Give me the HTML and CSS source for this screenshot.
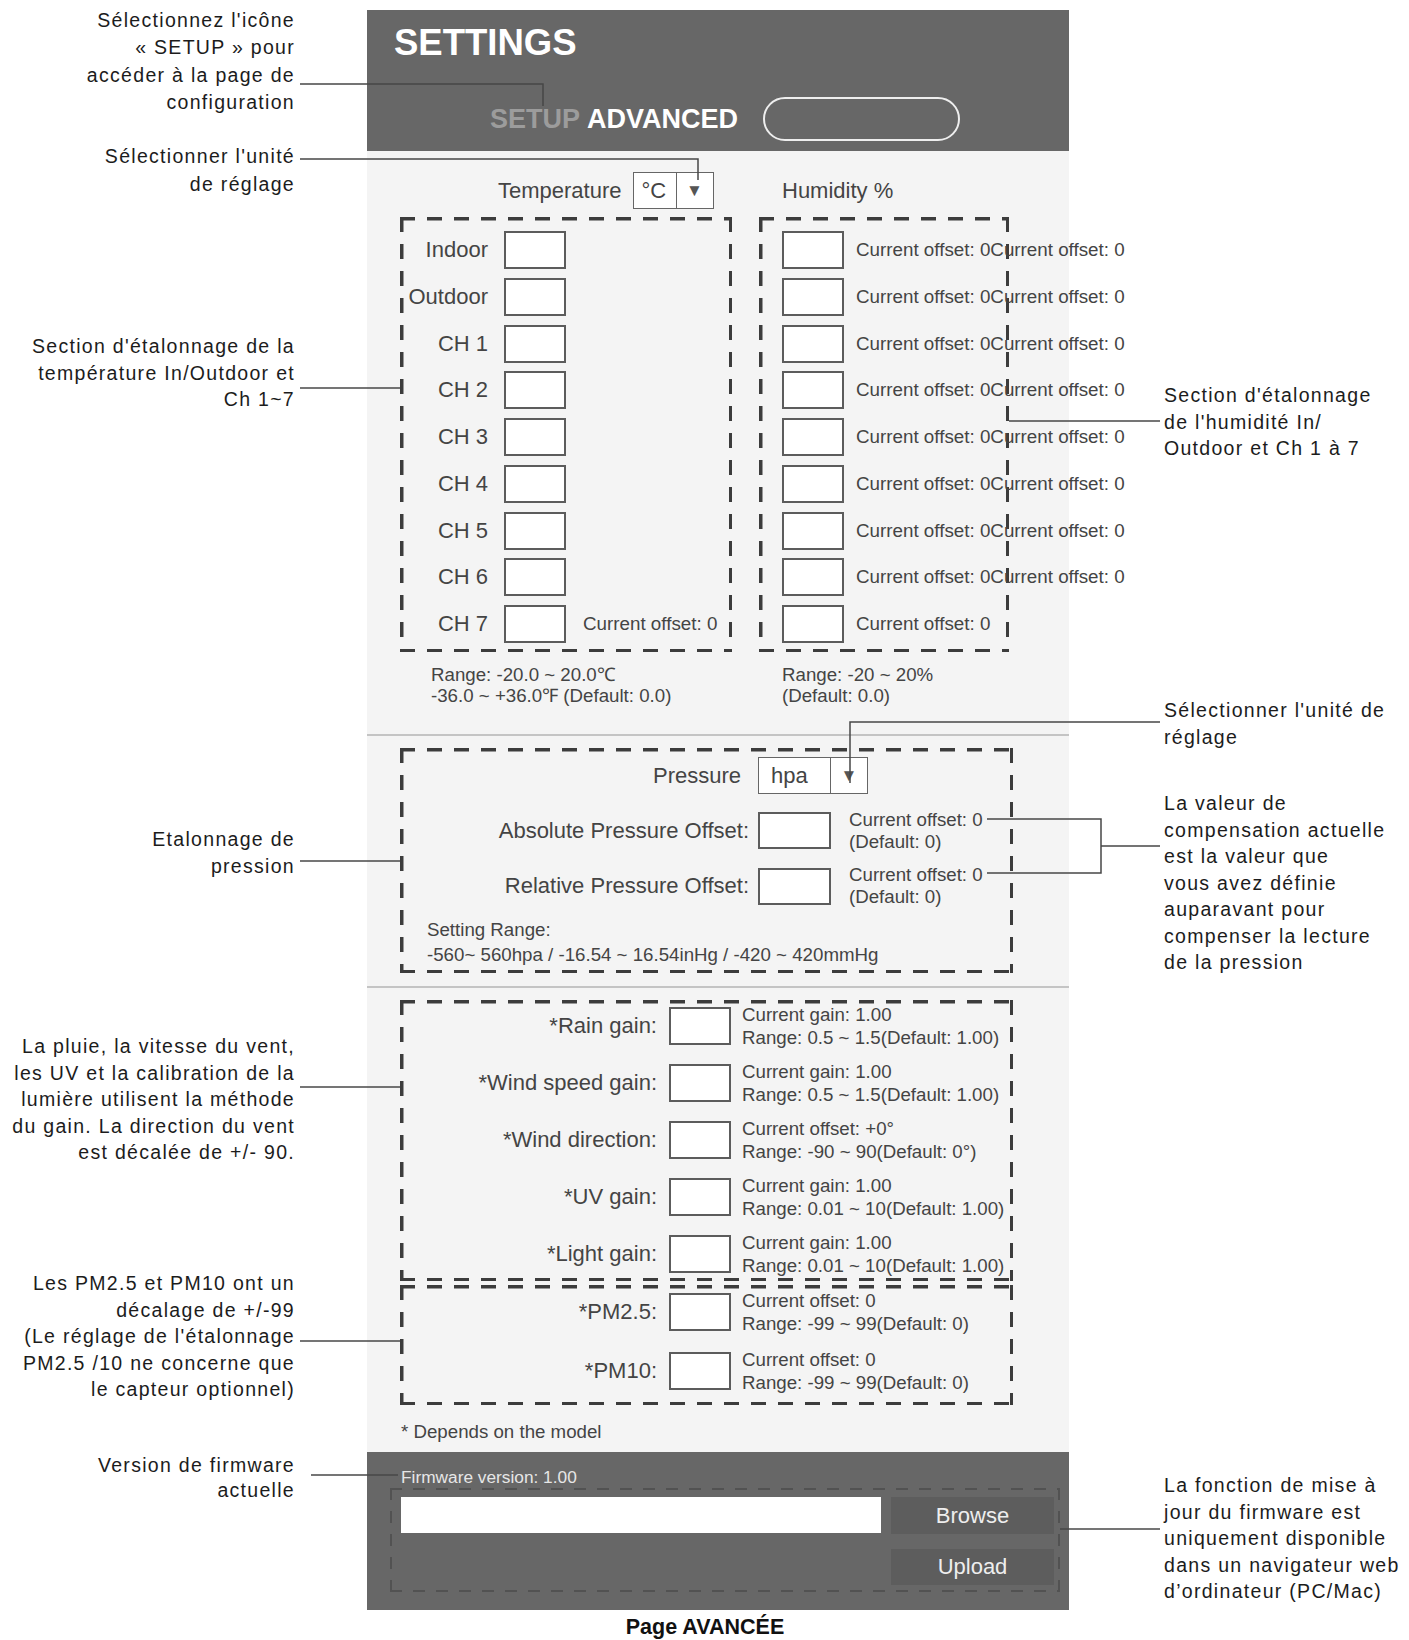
FILE: index.html
```html
<!DOCTYPE html>
<html lang="fr">
<head>
    <meta charset="UTF-8">
    <meta name="viewport" content="width=device-width, initial-scale=1.0">
    <title>Page AVANCÉE</title>
    <link rel="stylesheet" href="styles.css">
</head>
<body>

<div class="figure">

    <div class="panel">
        <div class="hdr">
            <div class="hdr-title">SETTINGS</div>
            <div class="tabs">
                <span class="tab-off">SETUP</span>
                <span class="tab-on">ADVANCED</span>
                <span class="pill"></span>
            </div>
        </div>

        <!-- temperature / humidity -->
        <div class="sec sec-temp">
            <div class="calib">
                <div class="col col-temp">
                    <div class="col-head">
                        <span>Temperature</span>
                        <span class="sel sel-unit"><span class="sel-val">°C</span><span class="sel-arr">▼</span></span>
                    </div>
                    <div class="dash box-temp">
                        <div class="row"><span class="lbl">Indoor</span><span class="inp"></span></div>
                        <div class="row"><span class="lbl">Outdoor</span><span class="inp"></span></div>
                        <div class="row"><span class="lbl">CH 1</span><span class="inp"></span></div>
                        <div class="row"><span class="lbl">CH 2</span><span class="inp"></span></div>
                        <div class="row"><span class="lbl">CH 3</span><span class="inp"></span></div>
                        <div class="row"><span class="lbl">CH 4</span><span class="inp"></span></div>
                        <div class="row"><span class="lbl">CH 5</span><span class="inp"></span></div>
                        <div class="row"><span class="lbl">CH 6</span><span class="inp"></span></div>
                        <div class="row"><span class="lbl">CH 7</span><span class="inp"></span><span class="note">Current offset: 0</span></div>
                    </div>
                    <div class="range range-temp">Range: -20.0 ~ 20.0℃<br>-36.0 ~ +36.0℉ (Default: 0.0)</div>
                </div>

                <div class="col col-hum">
                    <div class="col-head">
                        <span>Humidity %</span>
                    </div>
                    <div class="dash box-hum">
                        <div class="row"><span class="inp"></span><span class="note">Current offset: 0Current offset: 0</span></div>
                        <div class="row"><span class="inp"></span><span class="note">Current offset: 0Current offset: 0</span></div>
                        <div class="row"><span class="inp"></span><span class="note">Current offset: 0Current offset: 0</span></div>
                        <div class="row"><span class="inp"></span><span class="note">Current offset: 0Current offset: 0</span></div>
                        <div class="row"><span class="inp"></span><span class="note">Current offset: 0Current offset: 0</span></div>
                        <div class="row"><span class="inp"></span><span class="note">Current offset: 0Current offset: 0</span></div>
                        <div class="row"><span class="inp"></span><span class="note">Current offset: 0Current offset: 0</span></div>
                        <div class="row"><span class="inp"></span><span class="note">Current offset: 0Current offset: 0</span></div>
                        <div class="row"><span class="inp"></span><span class="note">Current offset: 0</span></div>
                    </div>
                    <div class="range">Range: -20 ~ 20%<br>(Default: 0.0)</div>
                </div>
            </div>
        </div>

        <!-- pressure -->
        <div class="sec sec-press">
            <div class="dash box-press">
                <div class="prow prow-unit">
                    <span class="plbl">Pressure</span>
                    <span class="sel sel-press"><span class="sel-val">hpa</span><span class="sel-arr">▼</span></span>
                </div>
                <div class="prow">
                    <span class="plbl">Absolute Pressure Offset:</span>
                    <span class="inp inp-wide"></span>
                    <span class="pnote">Current offset: 0<br>(Default: 0)</span>
                </div>
                <div class="prow">
                    <span class="plbl">Relative Pressure Offset:</span>
                    <span class="inp inp-wide"></span>
                    <span class="pnote">Current offset: 0<br>(Default: 0)</span>
                </div>
                <div class="prange">Setting Range:<br>-560~ 560hpa / -16.54 ~ 16.54inHg / -420 ~ 420mmHg</div>
            </div>
        </div>

        <!-- gains -->
        <div class="sec sec-gain">
            <div class="dash box-gain">
                <div class="grow"><span class="glbl">*Rain gain:</span><span class="inp"></span><span class="gnote">Current gain: 1.00<br>Range: 0.5 ~ 1.5(Default: 1.00)</span></div>
                <div class="grow"><span class="glbl">*Wind speed gain:</span><span class="inp"></span><span class="gnote">Current gain: 1.00<br>Range: 0.5 ~ 1.5(Default: 1.00)</span></div>
                <div class="grow"><span class="glbl">*Wind direction:</span><span class="inp"></span><span class="gnote">Current offset: +0°<br>Range: -90 ~ 90(Default: 0°)</span></div>
                <div class="grow"><span class="glbl">*UV gain:</span><span class="inp"></span><span class="gnote">Current gain: 1.00<br>Range: 0.01 ~ 10(Default: 1.00)</span></div>
                <div class="grow"><span class="glbl">*Light gain:</span><span class="inp"></span><span class="gnote">Current gain: 1.00<br>Range: 0.01 ~ 10(Default: 1.00)</span></div>
            </div>
            <div class="dash box-pm">
                <div class="grow"><span class="glbl">*PM2.5:</span><span class="inp"></span><span class="gnote">Current offset: 0<br>Range: -99 ~ 99(Default: 0)</span></div>
                <div class="grow"><span class="glbl">*PM10:</span><span class="inp"></span><span class="gnote">Current offset: 0<br>Range: -99 ~ 99(Default: 0)</span></div>
            </div>
            <div class="footnote">* Depends on the model</div>
        </div>

        <!-- firmware -->
        <div class="fw">
            <div class="fw-ver">Firmware version: 1.00</div>
            <div class="fw-box">
                <span class="fw-file"></span>
                <span class="fw-btn fw-btn-top">Browse</span>
                <span></span>
                <span class="fw-btn">Upload</span>
            </div>
        </div>
    </div>

    <div class="caption">Page AVANCÉE</div>

    <!-- callouts -->
    <div class="note-l n-setup">Sélectionnez l'icône<br>« SETUP » pour<br>accéder à la page de<br>configuration</div>
    <div class="note-l n-unit">Sélectionner l'unité<br>de réglage</div>
    <div class="note-l n-temp">Section d'étalonnage de la<br>température In/Outdoor et<br>Ch 1~7</div>
    <div class="note-l n-press">Etalonnage de<br>pression</div>
    <div class="note-l n-gain">La pluie, la vitesse du vent,<br>les UV et la calibration de la<br>lumière utilisent la méthode<br>du gain. La direction du vent<br>est décalée de +/- 90.</div>
    <div class="note-l n-pm">Les PM2.5 et PM10 ont un<br>décalage de +/-99<br>(Le réglage de l'étalonnage<br>PM2.5 /10 ne concerne que<br>le capteur optionnel)</div>
    <div class="note-l n-fw">Version de firmware<br>actuelle</div>

    <div class="note-r n-hum">Section d'étalonnage<br>de l'humidité In/<br>Outdoor et Ch 1 à 7</div>
    <div class="note-r n-punit">Sélectionner l'unité de<br>réglage</div>
    <div class="note-r n-comp">La valeur de<br>compensation actuelle<br>est la valeur que<br>vous avez définie<br>auparavant pour<br>compenser la lecture<br>de la pression</div>
    <div class="note-r n-fwup">La fonction de mise à<br>jour du firmware est<br>uniquement disponible<br>dans un navigateur web<br>d’ordinateur (PC/Mac)</div>

    <svg class="leaders" width="1409" height="1640" viewBox="0 0 1409 1640">
        <g fill="none" stroke="#474747" stroke-width="1.5">
            <path d="M300 84 H543 V106"/>
            <path d="M300 159 H698 V180"/>
            <path d="M300 388 H400"/>
            <path d="M1009 421 H1160"/>
            <path d="M1160 722 H850 V783"/>
            <path d="M987 819 H1101 V873 H987 M1101 846 H1160"/>
            <path d="M300 861 H400"/>
            <path d="M300 1087 H400"/>
            <path d="M300 1341 H400"/>
            <path d="M311 1475 H398"/>
            <path d="M1060 1529 H1160"/>
        </g>
    </svg>
</div>

</body>
</html>
```

FILE: styles.css
```css
body {
    margin: 0;
    padding: 0;
    background-color: #ffffff;
    font-family: 'Liberation Sans', Arial, sans-serif;
    color: #444;
}

.figure {
    position: relative;
    width: 1409px;
    height: 1640px;
    overflow: hidden;
}

/* settings panel */
.panel {
    width: 702px;
    margin: 10px 0 0 367px;
    background-color: #f4f4f4;
}

.hdr {
    background-color: #676767;
    height: 141px;
    box-sizing: border-box;
    padding: 13px 0 10px 27px;
}

.hdr-title {
    color: #fff;
    font-size: 36.5px;
    font-weight: bold;
    line-height: 40px;
}

.tabs {
    display: flex;
    align-items: center;
    height: 44px;
    margin: 34px 0 0 96px;
    font-size: 27px;
    font-weight: bold;
}

.tab-off {
    color: #9c9c9c;
}

.tab-on {
    color: #fff;
    margin-left: 7px;
}

.pill {
    width: 193px;
    height: 40px;
    margin-left: 25px;
    border: 2px solid #eee;
    border-radius: 22px;
}

.sec {
    box-sizing: border-box;
}

.sec-temp {
    padding: 21px 0 28px 33px;
    border-bottom: 2px solid #c4c4c4;
}

/* dashed frames */
.dash {
    background-image:
        repeating-linear-gradient(90deg, #3c3c3c 0 15px, transparent 15px 27px),
        repeating-linear-gradient(90deg, #3c3c3c 0 15px, transparent 15px 27px),
        repeating-linear-gradient(180deg, #3c3c3c 0 15px, transparent 15px 27px),
        repeating-linear-gradient(180deg, #3c3c3c 0 15px, transparent 15px 27px);
    background-size: 100% 3.5px, 100% 3.5px, 3.5px 100%, 3.5px 100%;
    background-position: 0 0, 0 100%, 0 0, 100% 0;
    background-repeat: no-repeat;
    box-sizing: border-box;
}

.calib {
    display: grid;
    grid-template-columns: 332px 250px;
    column-gap: 27px;
}

.col-head {
    display: flex;
    align-items: center;
    height: 37px;
    margin-bottom: 8px;
    font-size: 22px;
}

.col-temp .col-head {
    padding-left: 98px;
}

.col-hum .col-head {
    padding-left: 23px;
}

.sel {
    display: flex;
    height: 37px;
    box-sizing: border-box;
    border: 1.5px solid #666;
    background-color: #fff;
    color: #444;
}

.sel-unit {
    margin-left: 11px;
}

.sel-val {
    display: flex;
    align-items: center;
    border-right: 1.5px solid #666;
}

.sel-unit .sel-val {
    width: 43px;
    padding-left: 8px;
    box-sizing: border-box;
}

.sel-arr {
    display: flex;
    align-items: center;
    justify-content: center;
    width: 36px;
    font-size: 17px;
    color: #555;
}

.box-temp,
.box-hum {
    height: 435px;
    padding: 14px 0 9px;
    display: flex;
    flex-direction: column;
    gap: 8.75px;
}

.row {
    display: flex;
    align-items: center;
    height: 38px;
}

.lbl {
    width: 88px;
    text-align: right;
    margin-right: 16px;
    font-size: 22px;
}

.inp {
    width: 62px;
    height: 38px;
    box-sizing: border-box;
    border: 2px solid #5c5c5c;
    background-color: #fff;
    flex-shrink: 0;
}

.note {
    font-size: 18.8px;
    white-space: nowrap;
    margin-left: 17px;
}

.box-hum .row {
    padding-left: 23px;
}

.box-hum .note {
    margin-left: 12px;
}

.range {
    margin-top: 12px;
    padding-left: 23px;
    font-size: 18.7px;
    line-height: 21px;
}

.range-temp {
    padding-left: 31px;
}

/* pressure */
.sec-press {
    padding: 12px 0 13px 33px;
    border-bottom: 2px solid #c4c4c4;
}

.box-press {
    width: 613px;
    height: 225px;
    padding-top: 9px;
}

.prow {
    display: flex;
    align-items: center;
    height: 37px;
    margin-bottom: 18px;
}

.prow:nth-child(3) {
    height: 38px;
    margin-bottom: 0;
}

.plbl {
    width: 349px;
    text-align: right;
    margin-right: 9px;
    font-size: 22px;
}

.prow-unit .plbl {
    padding-right: 8px;
    box-sizing: border-box;
}

.sel-press .sel-val {
    width: 72px;
    padding-left: 12px;
    box-sizing: border-box;
    font-size: 22px;
}

.inp-wide {
    width: 73px;
    height: 37px;
}

.pnote {
    margin-left: 18px;
    font-size: 18.7px;
    line-height: 22px;
}

.prange {
    margin-top: 12px;
    padding-left: 27px;
    font-size: 18.7px;
    line-height: 25px;
}

/* gains */
.sec-gain {
    padding: 12px 0 8px 33px;
}

.box-gain,
.box-pm {
    width: 613px;
    display: flex;
    flex-direction: column;
}

.box-gain {
    height: 281px;
    padding: 7px 0 8px;
    gap: 19px;
}

.box-pm {
    height: 120px;
    margin-top: 4px;
    padding: 8px 0 15px;
    gap: 21px;
}

.grow {
    display: flex;
    align-items: center;
    height: 38px;
}

.glbl {
    width: 257px;
    text-align: right;
    margin-right: 12px;
    font-size: 22px;
}

.gnote {
    margin-left: 11px;
    font-size: 18.7px;
    line-height: 23px;
    white-space: nowrap;
}

.footnote {
    margin-top: 15px;
    padding-left: 1px;
    font-size: 18.7px;
    line-height: 24px;
}

/* firmware */
.fw {
    background-color: #676767;
    height: 158px;
    box-sizing: border-box;
    padding-top: 15px;
}

.fw-ver {
    padding-left: 34px;
    color: #e6e6e6;
    font-size: 17.3px;
    line-height: 20px;
}

.fw-box {
    display: grid;
    grid-template-columns: 480px 163px;
    column-gap: 10px;
    row-gap: 15px;
    width: 670px;
    height: 104px;
    margin: 1px 0 0 23px;
    padding: 9px 6px 7px 11px;
    box-sizing: border-box;
    background-image:
        repeating-linear-gradient(90deg, #525252 0 12px, transparent 12px 23px),
        repeating-linear-gradient(90deg, #525252 0 12px, transparent 12px 23px),
        repeating-linear-gradient(180deg, #525252 0 12px, transparent 12px 23px),
        repeating-linear-gradient(180deg, #525252 0 12px, transparent 12px 23px);
    background-size: 100% 2px, 100% 2px, 2px 100%, 2px 100%;
    background-position: 0 0, 0 100%, 0 0, 100% 0;
    background-repeat: no-repeat;
}

.fw-file {
    height: 36px;
    background-color: #fff;
}

.fw-btn {
    display: flex;
    align-items: center;
    justify-content: center;
    height: 36px;
    background-color: #5d5d5d;
    color: #eee;
    font-size: 22px;
}

.fw-btn-top {
    height: 37px;
}

.caption {
    width: 702px;
    margin-left: 367px;
    margin-top: 5px;
    padding-right: 26px;
    box-sizing: border-box;
    text-align: center;
    color: #111;
    font-size: 21.5px;
    font-weight: bold;
    line-height: 24px;
}

/* callouts */
.note-l,
.note-r {
    position: absolute;
    color: #1c1c1c;
    font-size: 19.5px;
    letter-spacing: 1.3px;
    line-height: 26.5px;
    white-space: nowrap;
}

.note-l {
    left: 0;
    width: 295px;
    text-align: right;
}

.note-r {
    left: 1164px;
}

.n-setup { top: 7px; line-height: 27.3px; }
.n-unit { top: 142px; line-height: 28px; }
.n-temp { top: 333px; }
.n-press { top: 826px; }
.n-gain { top: 1033px; }
.n-pm { top: 1270px; }
.n-fw { top: 1453px; line-height: 25px; }

.n-hum { top: 382px; }
.n-punit { top: 697px; }
.n-comp { top: 790px; }
.n-fwup { top: 1472px; }

.leaders {
    position: absolute;
    top: 0;
    left: 0;
    pointer-events: none;
}
```
